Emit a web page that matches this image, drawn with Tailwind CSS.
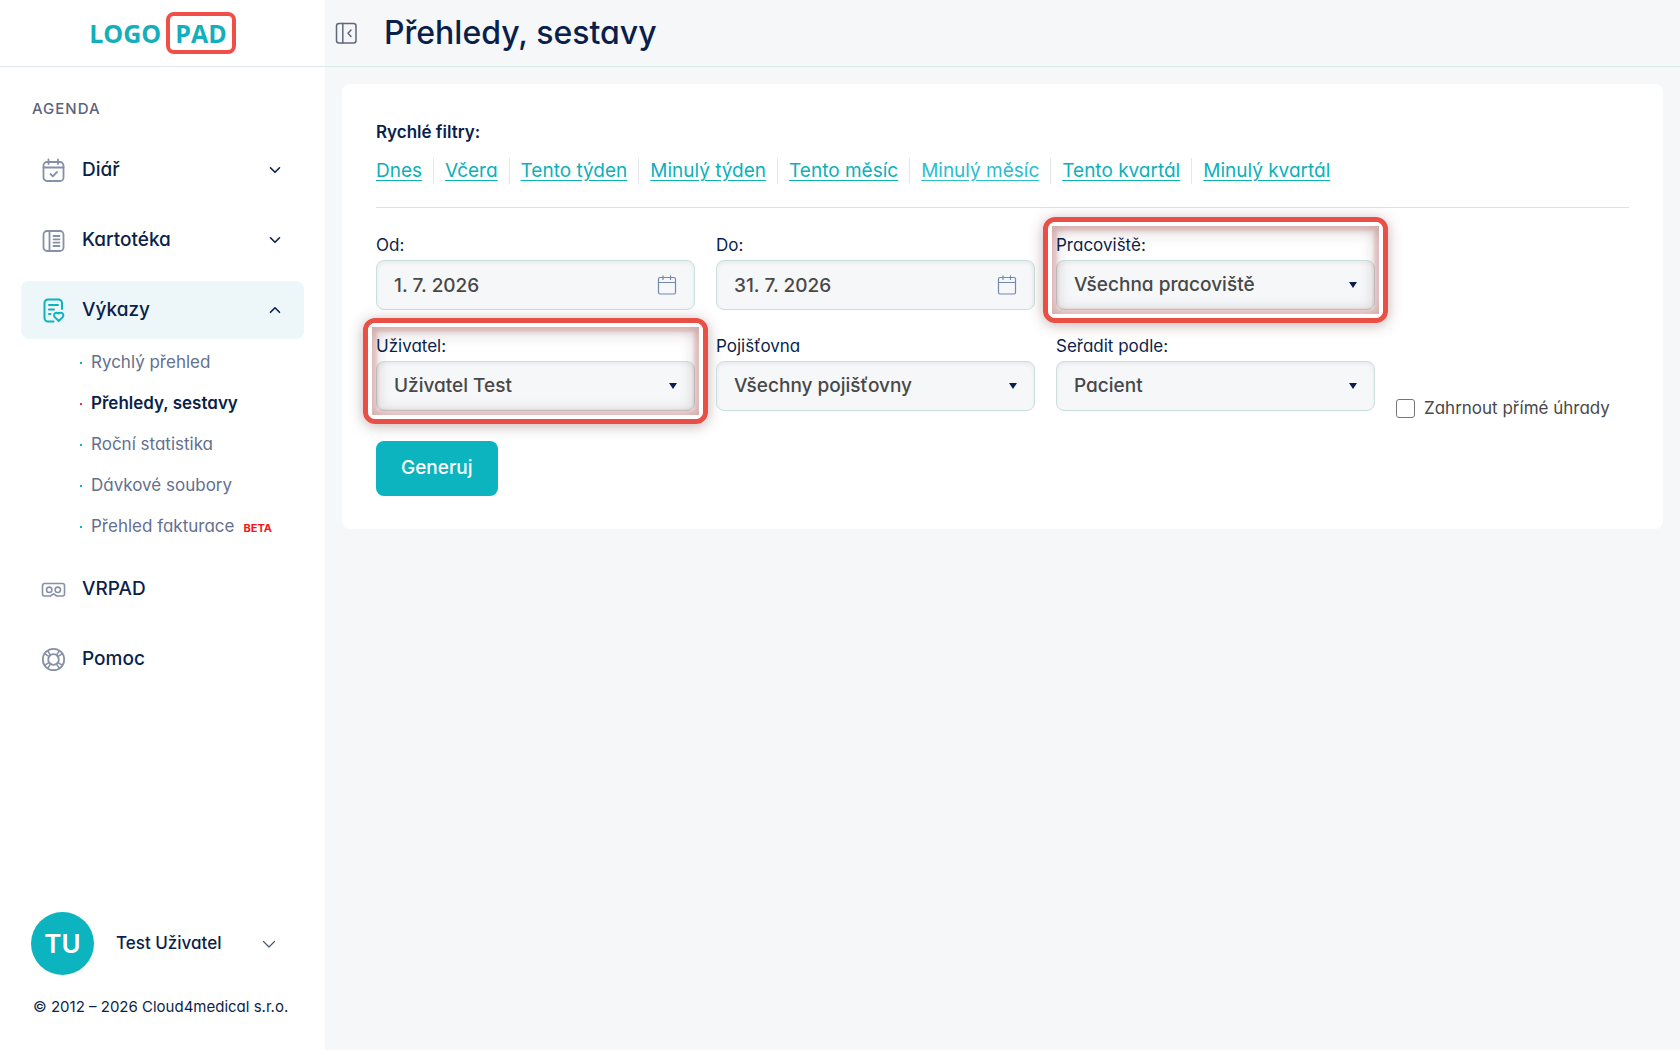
<!DOCTYPE html>
<html lang="cs">
  <head>
    <meta charset="UTF-8" />
    <meta name="viewport" content="width=device-width, initial-scale=1.0" />
    <title>Přehledy, sestavy</title>
    <script src="https://cdn.jsdelivr.net/npm/@tailwindcss/browser@4"></script>
  </head>
  <body class="flex min-h-screen bg-[#f5f7f9] font-['Inter',sans-serif] text-[#0b1f4b] [font-feature-settings:'cv11']">
    <!-- Sidebar -->
    <aside class="flex w-[325px] shrink-0 flex-col bg-white">
      <a
        href="#"
        class="flex h-[67px] items-center justify-center gap-[5px] border-b border-[#dbe9ea] font-['Open_Sans',sans-serif] text-[25px] leading-8 font-bold text-[#14afbb]"
      >
        <span>LOGO</span>
        <span class="flex h-[42px] items-center rounded-lg border-4 border-[#f04f47] px-[5px]">PAD</span>
      </a>

      <nav class="flex flex-col px-[21px] pt-[30px]">
        <h2 class="mb-5 pl-[11px] text-[15px] leading-6 font-medium tracking-[1px] text-[#5b6479] uppercase">Agenda</h2>
        <ul class="flex flex-col gap-3">
          <li>
            <button type="button" class="flex h-[58px] w-full items-center rounded-lg pr-[23px] pl-5 text-[19px] font-medium">
              <svg class="mr-4 size-[25px] text-[#8690a6]" viewBox="0 0 25 25" fill="none" stroke="currentColor" stroke-width="1.8" stroke-linecap="round" stroke-linejoin="round">
                <rect x="2.5" y="4" width="20" height="19" rx="3.5" />
                <path d="M2.5 9.5h20M7.500 1.500v4.500M17 1.500v4.500M9.500 16l2.300 2.300L16 14" />
              </svg>
              Diář
              <svg class="ml-auto size-[12px]" viewBox="0 0 12 12" fill="none" stroke="currentColor" stroke-width="1.6" stroke-linecap="round" stroke-linejoin="round"><path d="M1.500 3.800 6 8.300l4.500-4.500" /></svg>
            </button>
          </li>
          <li>
            <button type="button" class="flex h-[58px] w-full items-center rounded-lg pr-[23px] pl-5 text-[19px] font-medium">
              <svg class="mr-4 size-[25px] text-[#8690a6]" viewBox="0 0 25 25" fill="none" stroke="currentColor" stroke-width="1.8" stroke-linecap="round" stroke-linejoin="round">
                <rect x="2.500" y="3" width="20" height="20" rx="3.500" />
                <path d="M8.500 3v20M12.500 8h6M12.500 11.300h6M12.500 14.600h6M12.500 18h6" />
              </svg>
              Kartotéka
              <svg class="ml-auto size-[12px]" viewBox="0 0 12 12" fill="none" stroke="currentColor" stroke-width="1.6" stroke-linecap="round" stroke-linejoin="round"><path d="M1.500 3.800 6 8.300l4.500-4.500" /></svg>
            </button>
          </li>
          <li>
            <button type="button" class="flex h-[58px] w-full items-center rounded-lg bg-[#edf6f9] pr-[23px] pl-5 text-[19px] font-medium">
              <svg class="mr-4 size-[25px] text-[#0cb4bf]" viewBox="0 0 25 25" fill="none" stroke="currentColor" stroke-width="2" stroke-linecap="round" stroke-linejoin="round">
                <path d="M21 11V5a3.500 3.500 0 0 0-3.500-3.500h-10.500A3.500 3.500 0 0 0 3.500 5v15A3.500 3.500 0 0 0 7 23.500h5.500M8 7h9M8 11.500h5M8 16h1.500" />
                <path d="M17.700 23l-3.900-3.900a2.600 2.600 0 0 1 3.900-3.600 2.600 2.600 0 0 1 3.900 3.600z" />
              </svg>
              Výkazy
              <svg class="ml-auto size-[12px]" viewBox="0 0 12 12" fill="none" stroke="currentColor" stroke-width="1.6" stroke-linecap="round" stroke-linejoin="round"><path d="M1.500 8.300 6 3.800l4.500 4.500" /></svg>
            </button>
            <ul class="pt-[3px] pb-px pl-[59px] text-[17px] text-[#63708f]">
              <li><a href="#" class="flex h-[41px] items-center gap-[9px]"><span class="size-[2px] bg-[#0cb4bf]"></span>Rychlý přehled</a></li>
              <li><a href="#" class="flex h-[41px] items-center gap-[9px] font-semibold text-[#0b1f4b]"><span class="size-[2px] bg-[#f0314a]"></span>Přehledy, sestavy</a></li>
              <li><a href="#" class="flex h-[41px] items-center gap-[9px]"><span class="size-[2px] bg-[#0cb4bf]"></span>Roční statistika</a></li>
              <li><a href="#" class="flex h-[41px] items-center gap-[9px]"><span class="size-[2px] bg-[#0cb4bf]"></span>Dávkové soubory</a></li>
              <li>
                <a href="#" class="flex h-[41px] items-center gap-[9px]"><span class="size-[2px] bg-[#0cb4bf]"></span>Přehled fakturace <span class="pt-[3px] text-[11px] font-bold text-[#fb1414]">BETA</span></a>
              </li>
            </ul>
          </li>
          <li>
            <a href="#" class="flex h-[58px] items-center rounded-lg pr-6 pl-5 text-[19px] font-medium">
              <svg class="mr-4 size-[25px] text-[#8690a6]" viewBox="0 0 25 25" fill="none" stroke="currentColor" stroke-width="1.600" stroke-linejoin="round">
                <path d="M3.500 6.500h18a2 2 0 0 1 2 2v8.500a2 2 0 0 1-2 2h-5.800l-3.200-2.200-3.200 2.200H3.500a2 2 0 0 1-2-2V8.500a2 2 0 0 1 2-2z" />
                <circle cx="8.200" cy="12.800" r="2.700" />
                <circle cx="16.800" cy="12.800" r="2.700" />
              </svg>
              VRPAD
            </a>
          </li>
          <li>
            <a href="#" class="flex h-[58px] items-center rounded-lg pr-6 pl-5 text-[19px] font-medium">
              <svg class="mr-4 size-[25px] text-[#8690a6]" viewBox="0 0 25 25" fill="none" stroke="currentColor" stroke-width="1.800">
                <circle cx="12.500" cy="12.500" r="10.700" />
                <circle cx="12.500" cy="12.500" r="5.300" />
                <path d="M4 6.800l4.200 2.800M6.800 4l2.800 4.200M21 6.800l-4.200 2.800M18.200 4l-2.800 4.200M4 18.200l4.200-2.800M6.800 21l2.800-4.200M21 18.200l-4.200-2.800M18.200 21l-2.800-4.200" stroke-width="1.500" />
              </svg>
              Pomoc
            </a>
          </li>
        </ul>
      </nav>

      <footer class="mt-auto px-[31px] pb-[31px]">
        <button type="button" class="flex w-full items-center pr-[18px] text-[17px] font-medium">
          <span class="mr-[22px] flex size-[63px] items-center justify-center rounded-full bg-[#0cb4bf] text-[26px] font-semibold text-white">TU</span>
          Test Uživatel
          <svg class="ml-auto size-[14px] text-[#4d5870]" viewBox="0 0 14 14" fill="none" stroke="currentColor" stroke-width="1.200" stroke-linecap="round" stroke-linejoin="round"><path d="M1.500 4.500 7 10l5.500-5.500" /></svg>
        </button>
        <p class="mt-5 pl-[2px] text-[15px] leading-6 whitespace-nowrap">© 2012 – 2026 Cloud4medical s.r.o.</p>
      </footer>
    </aside>

    <!-- Content -->
    <div class="min-w-0 grow">
      <header class="flex h-[67px] items-center gap-[26px] border-b border-[#d3ebe9] pl-[10px]">
        <button type="button" aria-label="Skrýt menu">
          <svg class="size-[23px] text-[#5f687d]" viewBox="0 0 23 23" fill="none" stroke="currentColor" stroke-width="1.500" stroke-linecap="round" stroke-linejoin="round">
            <rect x="1.500" y="1.500" width="19.500" height="19.500" rx="2.500" />
            <path d="M7.800 1.500v19.500M16 8l-3 3.200 3 3.200" />
          </svg>
        </button>
        <h1 class="text-[32px] leading-10 font-medium">Přehledy, sestavy</h1>
      </header>

      <main class="p-[17px]">
        <form class="rounded-lg bg-white px-[34px] pt-9 pb-[33px]">
          <h2 class="text-[17px] leading-6 font-semibold">Rychlé filtry:</h2>
          <ul class="mt-[14px] flex divide-x divide-[#e2e8ec] text-[19px] leading-[26px] text-[#0cb0bb]">
            <li class="pr-[11px]"><a href="#" class="underline underline-offset-3">Dnes</a></li>
            <li class="px-[11px]"><a href="#" class="underline underline-offset-3">Včera</a></li>
            <li class="px-[11px]"><a href="#" class="underline underline-offset-3">Tento týden</a></li>
            <li class="px-[11px]"><a href="#" class="underline underline-offset-3">Minulý týden</a></li>
            <li class="px-[11px]"><a href="#" class="underline underline-offset-3">Tento měsíc</a></li>
            <li class="px-[11px]"><a href="#" class="text-[#2bbdd0] underline underline-offset-3">Minulý měsíc</a></li>
            <li class="px-[11px]"><a href="#" class="underline underline-offset-3">Tento kvartál</a></li>
            <li class="pl-[11px]"><a href="#" class="underline underline-offset-3">Minulý kvartál</a></li>
          </ul>
          <hr class="mt-[23px] border-[#cfeae6]" />

          <div class="mt-[22px] grid grid-cols-[319fr_319fr_319fr_233fr] gap-[21px]">
            <div>
              <label for="dateFrom" class="block text-[17px] leading-[30px]">Od:</label>
              <div class="relative">
                <input type="text" id="dateFrom" value="1. 7. 2026" class="block h-[50px] w-full rounded-lg border border-[#cbdfdf] bg-[#f5f7f9] px-[17px] text-[19px] font-medium text-[#484848] shadow-[inset_0_2px_4px_rgba(0,0,0,0.06)]" />
                <svg class="pointer-events-none absolute top-[15px] right-[18px] size-[20px] text-[#7488b0]" viewBox="0 0 20 20" fill="none" stroke="currentColor" stroke-width="1.200" stroke-linecap="round"><rect x="1.500" y="2.500" width="17" height="16.500" rx="1.500" /><path d="M1.500 7.500h17M6 .8v3.700M13.500 .8v3.700" /></svg>
              </div>
            </div>

            <div>
              <label for="dateTo" class="block text-[17px] leading-[30px]">Do:</label>
              <div class="relative">
                <input type="text" id="dateTo" value="31. 7. 2026" class="block h-[50px] w-full rounded-lg border border-[#cbdfdf] bg-[#f5f7f9] px-[17px] text-[19px] font-medium text-[#484848] shadow-[inset_0_2px_4px_rgba(0,0,0,0.06)]" />
                <svg class="pointer-events-none absolute top-[15px] right-[18px] size-[20px] text-[#7488b0]" viewBox="0 0 20 20" fill="none" stroke="currentColor" stroke-width="1.200" stroke-linecap="round"><rect x="1.500" y="2.500" width="17" height="16.500" rx="1.500" /><path d="M1.500 7.500h17M6 .8v3.700M13.500 .8v3.700" /></svg>
              </div>
            </div>

            <div class="relative">
              <label for="workplace" class="block text-[17px] leading-[30px]">Pracoviště:</label>
              <div class="relative">
                <select id="workplace" class="block h-[50px] w-full appearance-none rounded-lg border border-[#cbdfdf] bg-[#f5f7f9] px-[17px] text-[19px] font-medium text-[#484848] shadow-[inset_0_2px_4px_rgba(0,0,0,0.06)]">
                  <option>Všechna pracoviště</option>
                </select>
                <svg class="pointer-events-none absolute top-[22px] right-[18px] h-[6px] w-[8px]" viewBox="0 0 8 6" fill="currentColor"><path d="M0 0h8L4 6z" /></svg>
              </div>
              <!-- highlight frame -->
              <div class="pointer-events-none absolute -inset-[13px] rounded-xl border-[5px] border-[#e94f45] shadow-[0_2px_14px_rgba(90,40,40,0.35)]">
                <div class="h-full rounded-lg border-4 border-white"><div class="h-full shadow-[inset_0_0_3px_5px_rgba(214,80,80,0.22),inset_0_2px_18px_rgba(60,20,20,0.32)]"></div></div>
              </div>
            </div>

            <div class="relative col-start-1">
              <label for="user" class="block text-[17px] leading-[30px]">Uživatel:</label>
              <div class="relative">
                <select id="user" class="block h-[50px] w-full appearance-none rounded-lg border border-[#cbdfdf] bg-[#f5f7f9] px-[17px] text-[19px] font-medium text-[#484848] shadow-[inset_0_2px_4px_rgba(0,0,0,0.06)]">
                  <option>Uživatel Test</option>
                </select>
                <svg class="pointer-events-none absolute top-[22px] right-[18px] h-[6px] w-[8px]" viewBox="0 0 8 6" fill="currentColor"><path d="M0 0h8L4 6z" /></svg>
              </div>
              <!-- highlight frame -->
              <div class="pointer-events-none absolute -inset-[13px] rounded-xl border-[5px] border-[#e94f45] shadow-[0_2px_14px_rgba(90,40,40,0.35)]">
                <div class="h-full rounded-lg border-4 border-white"><div class="h-full shadow-[inset_0_0_3px_5px_rgba(214,80,80,0.22),inset_0_2px_18px_rgba(60,20,20,0.32)]"></div></div>
              </div>
            </div>

            <div>
              <label for="insurer" class="block text-[17px] leading-[30px]">Pojišťovna</label>
              <div class="relative">
                <select id="insurer" class="block h-[50px] w-full appearance-none rounded-lg border border-[#cbdfdf] bg-[#f5f7f9] px-[17px] text-[19px] font-medium text-[#484848] shadow-[inset_0_2px_4px_rgba(0,0,0,0.06)]">
                  <option>Všechny pojišťovny</option>
                </select>
                <svg class="pointer-events-none absolute top-[22px] right-[18px] h-[6px] w-[8px]" viewBox="0 0 8 6" fill="currentColor"><path d="M0 0h8L4 6z" /></svg>
              </div>
            </div>

            <div>
              <label for="sortBy" class="block text-[17px] leading-[30px]">Seřadit podle:</label>
              <div class="relative">
                <select id="sortBy" class="block h-[50px] w-full appearance-none rounded-lg border border-[#cbdfdf] bg-[#f5f7f9] px-[17px] text-[19px] font-medium text-[#484848] shadow-[inset_0_2px_4px_rgba(0,0,0,0.06)]">
                  <option>Pacient</option>
                </select>
                <svg class="pointer-events-none absolute top-[22px] right-[18px] h-[6px] w-[8px]" viewBox="0 0 8 6" fill="currentColor"><path d="M0 0h8L4 6z" /></svg>
              </div>
            </div>

            <div class="-mb-[7px] flex items-center gap-[9px] self-end">
              <input type="checkbox" id="directPayments" class="size-[19px] shrink-0 appearance-none rounded-[3px] border border-[#767676] bg-white checked:bg-[#0cb4bf]" />
              <label for="directPayments" class="text-[17px] leading-5 whitespace-nowrap text-[#484848]">Zahrnout přímé úhrady</label>
            </div>
          </div>

          <button type="submit" class="mt-[30px] block h-[55px] rounded-lg bg-[#0cb4bf] px-[25px] text-[19px] font-medium text-white">Generuj</button>
        </form>
      </main>
    </div>
  </body>
</html>
